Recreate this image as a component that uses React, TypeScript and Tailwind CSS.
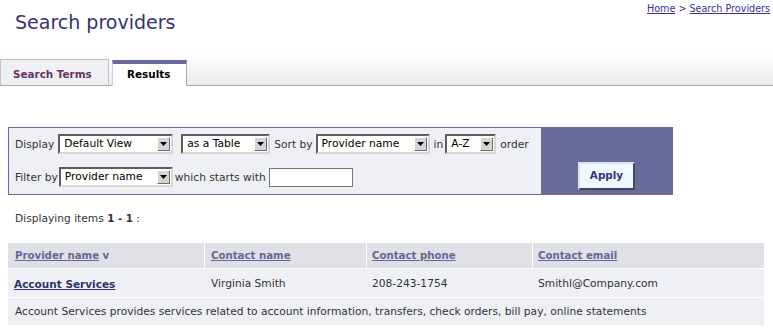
import React from "react";

function Arrow() {
  return (
    <span className="ml-auto mr-[1px] flex h-[14px] w-[13px] shrink-0 items-center justify-center border border-t-white border-l-white border-r-[#6e6e6e] border-b-[#6e6e6e] bg-[#d4d4d4]">
      <svg width="7" height="4" viewBox="0 0 7 4">
        <polygon points="0,0 7,0 3.5,4" fill="#000" />
      </svg>
    </span>
  );
}

function Select({ w, label }: { w: string; label: string }) {
  return (
    <div
      className={`${w} flex h-[20px] shrink-0 items-center border-2 border-t-[#5e5e5e] border-l-[#5e5e5e] border-r-[#d8d8d8] border-b-[#d8d8d8] bg-white`}
    >
      <span className="pl-[4px] text-[10.7px] leading-[14px] whitespace-nowrap text-black">{label}</span>
      <Arrow />
    </div>
  );
}

export default function App() {
  return (
    <div className="relative h-[334px] w-[773px] overflow-hidden bg-white font-['DejaVu_Sans',sans-serif] text-[#333]">
      {/* header */}
      <div className="flex h-[53px] items-start justify-between">
        <h1 className="pl-[15px] pt-[11px] text-[19px] leading-[23px] font-normal text-[#333377]">
          Search providers
        </h1>
        <div className="pr-[3px] pt-[3px] text-[9.6px] leading-[12px] text-[#333399]">
          <a className="underline">Home</a> &gt; <a className="underline">Search Providers</a>
        </div>
      </div>

      {/* tab bar */}
      <div className="flex h-[33px] items-end border-b border-[#a8a8a8] bg-gradient-to-b from-white to-[#ececec]">
        <div className="h-[26px] w-[109px] border border-b-0 border-[#c4c4c4] bg-[#eef0f5] pl-[12px] pt-[8px] text-[10.4px] leading-[13px] font-bold text-[#663366]">
          Search Terms
        </div>
        <div className="-mb-px ml-[3px] h-[26px] w-[75px] border-t-4 border-l border-r border-t-[#6b6b9b] border-l-[#d0d0d0] border-r-[#a8a8a8] bg-white pl-[14px] pt-[4px] text-[10.4px] leading-[13px] font-bold text-black">
          Results
        </div>
      </div>

      {/* filter panel */}
      <div className="ml-[8px] mt-[41px] flex h-[68px] w-[665px] border border-[#6b6b9b] bg-[#6b6b9b]">
        <div className="flex w-[532px] flex-col bg-[#eef0f5] pl-[6px] pt-[6px] text-[10.67px] leading-[13px] text-[#333]">
          <div className="flex h-[20px] items-center">
            <span>Display</span>
            <span className="ml-[4px]" />
            <Select w="w-[115px]" label="Default View" />
            <span className="ml-[8px]" />
            <Select w="w-[89px]" label="as a Table" />
            <span className="ml-[4px]">Sort by</span>
            <span className="ml-[3px]" />
            <Select w="w-[114px]" label="Provider name" />
            <span className="ml-[4px]">in</span>
            <span className="ml-[2px]" />
            <Select w="w-[51px]" label="A-Z" />
            <span className="ml-[4px]">order</span>
          </div>
          <div className="mt-[13px] flex h-[20px] items-center">
            <span>Filter by</span>
            <span className="ml-[1px]" />
            <Select w="w-[114px]" label="Provider name" />
            <span className="ml-[2px]">which starts with</span>
            <span className="ml-[3px]" />
            <div className="h-[19px] w-[84px] border border-[#777] bg-white" />
          </div>
        </div>
        <div className="flex flex-1 items-end justify-center pb-[4px]">
          <button className="h-[28px] w-[57px] border-2 border-t-[#dde4ee] border-l-[#dde4ee] border-r-[#404a5c] border-b-[#404a5c] bg-[#f0f8ff] text-[10.4px] font-bold text-[#333377]">
            Apply
          </button>
        </div>
      </div>

      {/* count */}
      <div className="pl-[15px] pt-[17px] text-[10.67px] leading-[13px] text-[#333]">
        Displaying items <b className="text-[10.3px]">1 - 1</b> :
      </div>

      {/* table */}
      <div className="ml-[8px] mt-[18px] w-[756px] text-[10.67px] leading-[13px]">
        <div className="flex h-[25px] bg-[#dfe1e6] text-[10.2px] font-bold text-[#666699]">
          <div className="flex w-[197px] items-center border-r border-white pl-[7px]">
            <span className="underline">Provider name</span>&nbsp;v
          </div>
          <div className="flex w-[162px] items-center border-r border-white pl-[6px]">
            <span className="underline">Contact name</span>
          </div>
          <div className="flex w-[166px] items-center border-r border-white pl-[5px]">
            <span className="underline">Contact phone</span>
          </div>
          <div className="flex flex-1 items-center pl-[5px]">
            <span className="underline">Contact email</span>
          </div>
        </div>
        <div className="mt-px flex h-[28px] bg-[#eef0f5] text-[#333]">
          <div className="flex w-[197px] items-center pl-[6px] pt-[2px]">
            <a className="text-[10.5px] font-bold text-[#333366] underline">Account Services</a>
          </div>
          <div className="flex w-[162px] items-center pl-[6px]">Virginia Smith</div>
          <div className="flex w-[166px] items-center pl-[5px]">208-243-1754</div>
          <div className="flex flex-1 items-center pl-[5px]">Smithl@Company.com</div>
        </div>
        <div className="mt-px flex h-[27px] items-center bg-[#eef0f5] pl-[7px] text-[#333]">
          Account Services provides services related to account information, transfers, check orders, bill pay, online statements
        </div>
      </div>
    </div>
  );
}
